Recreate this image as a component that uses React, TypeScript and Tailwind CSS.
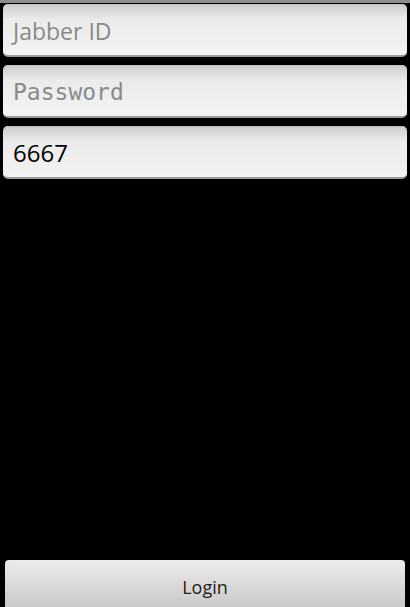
const fieldClass =
  "flex h-[53px] items-center rounded-[5px] border-b-2 border-[#9a9a9a] bg-gradient-to-b from-[#cccccc] via-[#ebebeb] via-30% to-[#f3f3f3] px-[10px] pt-[3px] shadow-[inset_0_1px_0_#bdbdbd]";

const App = () => {
  return (
    <div className="flex h-[607px] w-[410px] flex-col overflow-hidden bg-black">
      <div className="h-[3px] bg-[#8c8c8c]" />
      <div className="flex flex-col gap-[8px] px-[3px] pt-px">
        <div className={fieldClass}>
          <span className="font-['Open_Sans',sans-serif] text-[23px] text-[#8a8a8a]">
            Jabber ID
          </span>
        </div>
        <div className={fieldClass}>
          <span className="font-['DejaVu_Sans_Mono',monospace] text-[23px] text-[#8a8a8a]">
            Password
          </span>
        </div>
        <div className={fieldClass}>
          <span className="font-['Open_Sans',sans-serif] text-[24px] text-black">
            6667
          </span>
        </div>
      </div>
      <div className="mt-auto px-[5px]">
        <button className="flex h-[47px] w-full items-start justify-center rounded-t-[4px] bg-gradient-to-b from-[#ececec] to-[#c9c9c9] pt-[14px] font-['Open_Sans',sans-serif] text-[18px] text-[#222]">
          Login
        </button>
      </div>
    </div>
  );
};

export default App;
